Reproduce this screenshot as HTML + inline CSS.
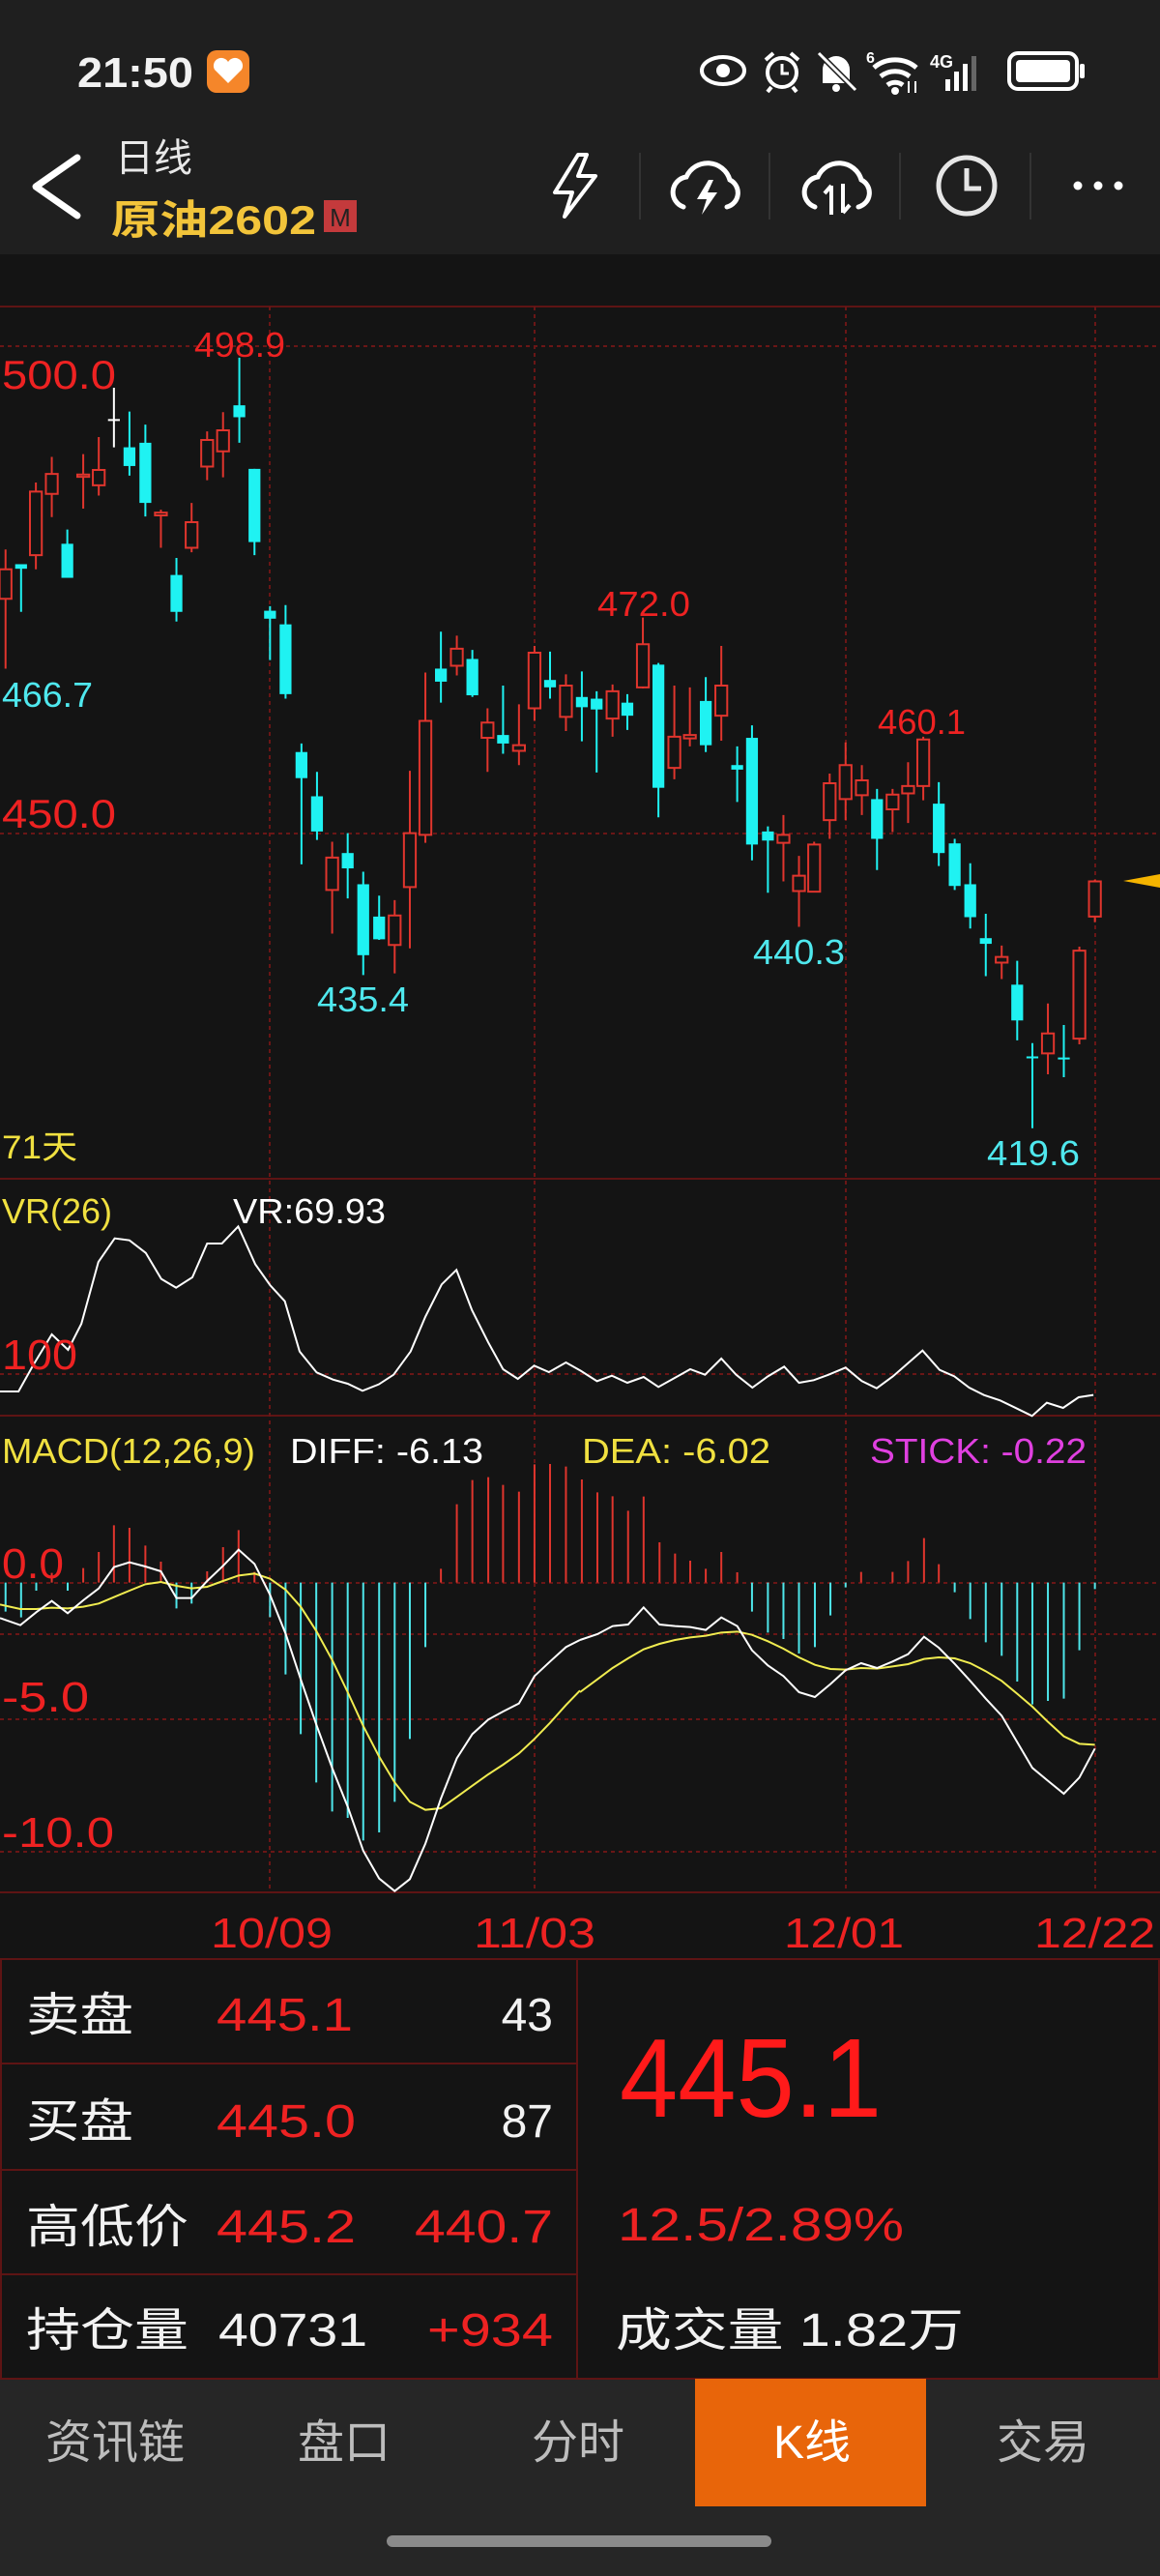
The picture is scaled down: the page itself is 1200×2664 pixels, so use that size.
<!DOCTYPE html>
<html><head><meta charset="utf-8">
<style>
html,body{margin:0;padding:0;background:#141414;}
svg{display:block}
text{font-family:"Liberation Sans","Noto Sans CJK SC",sans-serif;}
</style></head>
<body>
<svg width="1200" height="2664" viewBox="0 0 1200 2664" xmlns="http://www.w3.org/2000/svg">
<!-- backgrounds -->
<rect x="0" y="0" width="1200" height="263" fill="#1f1f1f"/>
<rect x="0" y="263" width="1200" height="2197" fill="#141414"/>
<rect x="0" y="2460" width="1200" height="204" fill="#262626"/>

<!-- status bar -->
<text x="80" y="90" font-size="44" font-weight="bold" fill="#f2f2f2" textLength="120" lengthAdjust="spacingAndGlyphs">21:50</text>
<rect x="214" y="52" width="44" height="44" rx="10" fill="#f5862a"/>
<path d="M236 86 L222 72 A7 7 0 0 1 236 64 A7 7 0 0 1 250 72 Z" fill="#fff"/>
<!-- eye -->
<ellipse cx="748" cy="73" rx="22" ry="14" fill="none" stroke="#fff" stroke-width="4"/>
<circle cx="748" cy="73" r="7" fill="#fff"/>
<!-- alarm -->
<circle cx="809" cy="75" r="15" fill="none" stroke="#fff" stroke-width="4"/>
<path d="M809 66V76H816" stroke="#fff" stroke-width="3" fill="none"/>
<path d="M792 62 L800 55 M826 62 L818 55 M798 90 L794 95 M820 90 L824 95" stroke="#fff" stroke-width="4"/>
<!-- bell muted -->
<path d="M851 86 V72 A14 14 0 0 1 879 72 V86 Z" fill="#fff"/>
<circle cx="865" cy="91" r="4" fill="#fff"/>
<path d="M846 54 L886 94" stroke="#1f1f1f" stroke-width="6"/><path d="M847 55 L885 93" stroke="#fff" stroke-width="3"/>
<!-- wifi -->
<text x="896" y="65" font-size="16" font-weight="bold" fill="#fff">6</text>
<path d="M904 70 A34 34 0 0 1 948 70 M911 79 A24 24 0 0 1 941 79 M918 88 A13 13 0 0 1 934 88" stroke="#fff" stroke-width="5" fill="none"/>
<circle cx="926" cy="94" r="4" fill="#fff"/>
<path d="M940 84 V96 M947 84 V96" stroke="#fff" stroke-width="2"/>
<!-- 4G signal -->
<text x="962" y="70" font-size="18" font-weight="bold" fill="#fff">4G</text>
<rect x="978" y="82" width="5" height="12" fill="#fff"/><rect x="987" y="74" width="5" height="20" fill="#fff"/><rect x="996" y="66" width="5" height="28" fill="#fff"/><rect x="1005" y="58" width="5" height="36" fill="#666"/>
<!-- battery -->
<rect x="1044" y="55" width="70" height="37" rx="9" fill="none" stroke="#fff" stroke-width="4"/>
<rect x="1051" y="62" width="56" height="23" rx="4" fill="#fff"/>
<rect x="1117" y="66" width="5" height="15" rx="2" fill="#fff"/>

<!-- header row -->
<polyline points="80,163 37,193 80,223" fill="none" stroke="#fff" stroke-width="7" stroke-linecap="round" stroke-linejoin="round"/>
<text x="119" y="177" font-size="40" fill="#e8e8e8">日线</text>
<text x="115" y="242" font-size="42" font-weight="bold" fill="#f2c43a" textLength="212" lengthAdjust="spacingAndGlyphs">原油2602</text>
<rect x="335" y="207" width="34" height="33" fill="#c43a3c"/>
<text x="352" y="234" font-size="26" fill="#222" text-anchor="middle">M</text>
<path d="M598 160 L574 199 L592 199 L584 224 L616 182 L598 182 L607 160 Z" fill="none" stroke="#fff" stroke-width="4" stroke-linejoin="round"/>
<path d="M662 158V227 M796 158V227 M931 158V227 M1066 158V227" stroke="#333" stroke-width="2"/>
<path d="M707 214 A16 16 0 0 1 710 183 A24 24 0 0 1 755 186 A15 15 0 0 1 752 214" fill="none" stroke="#fff" stroke-width="5" stroke-linecap="round"/>
<path d="M733 186 L721 206 L731 206 L726 222 L742 199 L732 199 L738 186Z" fill="#fff"/>
<path d="M843 214 A16 16 0 0 1 846 183 A24 24 0 0 1 891 186 A15 15 0 0 1 888 214" fill="none" stroke="#fff" stroke-width="5" stroke-linecap="round"/>
<path d="M860 222V192 M853 200L860 192 M872 190V220 M879 212L872 220" fill="none" stroke="#fff" stroke-width="4"/>
<circle cx="1000" cy="192" r="29" fill="none" stroke="#e6e6e6" stroke-width="5"/>
<path d="M1000 174V195H1015" fill="none" stroke="#e6e6e6" stroke-width="5"/>
<circle cx="1115" cy="192" r="4.5" fill="#fff"/><circle cx="1136" cy="192" r="4.5" fill="#fff"/><circle cx="1157" cy="192" r="4.5" fill="#fff"/>

<!-- GRID -->
<g stroke="#5e1414" stroke-width="2">
<path d="M0 317H1200 M0 1219H1200 M0 1464H1200 M0 1957H1200 M0 2026H1200"/>
</g>
<g stroke="#6a1616" stroke-width="2" stroke-dasharray="4 4">
<path d="M0 358H1200 M0 862H1200 M0 1421H1200 M0 1637H1200 M0 1690H1200 M0 1778H1200 M0 1915H1200"/>
<path d="M279 317V1957 M553 317V1957 M875 317V1957 M1133 317V1957"/>
</g>

<!-- CANDLES left -->
<g transform="translate(0,310) scale(0.38265,0.58685)">
<path fill="none" stroke="#1ff2f2" stroke-width="2" vector-effect="non-scaling-stroke" d="M57 468V550 M182 405V490 M350 197V310 M393 220V382 M477 455V567 M647 102V252 M688 298V450 M730 540V635 M772 538V703 M815 782V995 M857 832V952 M940 940V1055 M982 1008V1190 M1025 1050V1128 M1192 585V710 M1277 617V700 M1360 680V800 M1487 620V703"/>
<path fill="none" stroke="#e0352d" stroke-width="2" vector-effect="non-scaling-stroke" d="M15 440V650 M97 322V475 M140 277V383 M225 272V368 M267 242V345 M435 370V437 M518 358V445 M560 232V318 M603 198V313 M898 955V1117 M1067 1058V1187 M1108 830V1143 M1150 657V957 M1235 592V662 M1318 720V832 M1403 713V820 M1445 610V742 M1530 660V760"/>
<path fill="none" stroke="#fff" stroke-width="2" vector-effect="non-scaling-stroke" d="M308 155V260 M292 212H324"/>
<g fill="#1ff2f2">
<rect x="41" y="466" width="32" height="8"/><rect x="166" y="430" width="32" height="60"/><rect x="334" y="260" width="32" height="33"/><rect x="377" y="252" width="32" height="106"/><rect x="461" y="485" width="32" height="65"/><rect x="631" y="186" width="32" height="21"/><rect x="672" y="298" width="32" height="129"/><rect x="714" y="548" width="32" height="14"/><rect x="756" y="572" width="32" height="123"/><rect x="799" y="797" width="32" height="46"/><rect x="841" y="875" width="32" height="62"/><rect x="924" y="975" width="32" height="27"/><rect x="966" y="1030" width="32" height="125"/><rect x="1009" y="1087" width="32" height="40"/><rect x="1176" y="650" width="32" height="23"/><rect x="1261" y="633" width="32" height="64"/><rect x="1344" y="767" width="32" height="15"/><rect x="1471" y="670" width="32" height="13"/>
</g>
<g fill="#141414" stroke="#e0352d" stroke-width="2" vector-effect="non-scaling-stroke">
<rect x="-1" y="475" width="32" height="52" vector-effect="non-scaling-stroke"/><rect x="81" y="338" width="32" height="112" vector-effect="non-scaling-stroke"/><rect x="124" y="307" width="32" height="35" vector-effect="non-scaling-stroke"/><rect x="209" y="308" width="32" height="4" vector-effect="non-scaling-stroke"/><rect x="251" y="300" width="32" height="27" vector-effect="non-scaling-stroke"/><rect x="419" y="375" width="32" height="5" vector-effect="non-scaling-stroke"/><rect x="502" y="392" width="32" height="45" vector-effect="non-scaling-stroke"/><rect x="544" y="247" width="32" height="47" vector-effect="non-scaling-stroke"/><rect x="587" y="230" width="32" height="37" vector-effect="non-scaling-stroke"/><rect x="882" y="983" width="32" height="57" vector-effect="non-scaling-stroke"/><rect x="1051" y="1085" width="32" height="52" vector-effect="non-scaling-stroke"/><rect x="1092" y="940" width="32" height="95" vector-effect="non-scaling-stroke"/><rect x="1134" y="742" width="32" height="201" vector-effect="non-scaling-stroke"/><rect x="1219" y="615" width="32" height="30" vector-effect="non-scaling-stroke"/><rect x="1302" y="745" width="32" height="27" vector-effect="non-scaling-stroke"/><rect x="1387" y="785" width="32" height="10" vector-effect="non-scaling-stroke"/><rect x="1429" y="622" width="32" height="98" vector-effect="non-scaling-stroke"/><rect x="1514" y="680" width="32" height="55" vector-effect="non-scaling-stroke"/>
</g>
</g>
<!-- CANDLES right -->
<g transform="translate(600,310) scale(0.38265,0.58685)">
<path fill="none" stroke="#1ff2f2" stroke-width="2" vector-effect="non-scaling-stroke" d="M5 655V778 M45 690V833 M128 695V758 M212 640V912 M340 665V797 M425 787V885 M465 750V988 M508 928V1045 M803 862V1005 M970 850V998 M1013 950V1040 M1055 993V1108 M1097 1082V1192 M1182 1165V1305 M1223 1310V1460 M1308 1278V1370 M1207 1335H1239 M1292 1337H1324"/>
<path fill="none" stroke="#e0352d" stroke-width="2" vector-effect="non-scaling-stroke" d="M88 678V770 M170 560V685 M255 680V845 M297 683V787 M382 610V777 M550 908V1025 M592 980V1105 M633 955V1043 M675 835V950 M718 780V917 M762 820V908 M845 862V938 M887 815V922 M928 770V882 M1140 1138V1197 M1265 1240V1365 M1350 1140V1312 M1392 1022V1097"/>
<g fill="#1ff2f2">
<rect x="-11" y="700" width="32" height="18"/><rect x="29" y="703" width="32" height="19"/><rect x="112" y="710" width="32" height="23"/><rect x="196" y="643" width="32" height="217"/><rect x="324" y="707" width="32" height="78"/><rect x="409" y="820" width="32" height="8"/><rect x="449" y="772" width="32" height="188"/><rect x="492" y="937" width="32" height="16"/><rect x="787" y="880" width="32" height="70"/><rect x="954" y="888" width="32" height="87"/><rect x="997" y="958" width="32" height="75"/><rect x="1039" y="1030" width="32" height="58"/><rect x="1081" y="1125" width="32" height="10"/><rect x="1166" y="1207" width="32" height="63"/>
</g>
<g fill="#141414" stroke="#e0352d" stroke-width="2">
<rect x="72" y="690" width="32" height="48" vector-effect="non-scaling-stroke"/><rect x="154" y="607" width="32" height="76" vector-effect="non-scaling-stroke"/><rect x="239" y="770" width="32" height="55" vector-effect="non-scaling-stroke"/><rect x="281" y="767" width="32" height="6" vector-effect="non-scaling-stroke"/><rect x="366" y="680" width="32" height="53" vector-effect="non-scaling-stroke"/><rect x="534" y="943" width="32" height="14" vector-effect="non-scaling-stroke"/><rect x="576" y="1015" width="32" height="27" vector-effect="non-scaling-stroke"/><rect x="617" y="960" width="32" height="83" vector-effect="non-scaling-stroke"/><rect x="659" y="852" width="32" height="65" vector-effect="non-scaling-stroke"/><rect x="702" y="820" width="32" height="60" vector-effect="non-scaling-stroke"/><rect x="746" y="847" width="32" height="26" vector-effect="non-scaling-stroke"/><rect x="829" y="872" width="32" height="26" vector-effect="non-scaling-stroke"/><rect x="871" y="857" width="32" height="13" vector-effect="non-scaling-stroke"/><rect x="912" y="775" width="32" height="82" vector-effect="non-scaling-stroke"/><rect x="1124" y="1158" width="32" height="10" vector-effect="non-scaling-stroke"/><rect x="1249" y="1293" width="32" height="35" vector-effect="non-scaling-stroke"/><rect x="1334" y="1147" width="32" height="155" vector-effect="non-scaling-stroke"/><rect x="1376" y="1025" width="32" height="62" vector-effect="non-scaling-stroke"/>
</g>
</g>
<polygon points="1162,911 1200,904 1200,918" fill="#f5b400"/>

<!-- main chart labels -->
<text x="2" y="402" font-size="42" fill="#ee2222" textLength="118" lengthAdjust="spacingAndGlyphs">500.0</text>
<text x="2" y="856" font-size="42" fill="#ee2222" textLength="118" lengthAdjust="spacingAndGlyphs">450.0</text>
<text x="2" y="731" font-size="36" fill="#4fe8ee" textLength="94" lengthAdjust="spacingAndGlyphs">466.7</text>
<text x="201" y="369" font-size="36" fill="#ee2222" textLength="94" lengthAdjust="spacingAndGlyphs">498.9</text>
<text x="328" y="1046" font-size="36" fill="#4fe8ee" textLength="95" lengthAdjust="spacingAndGlyphs">435.4</text>
<text x="618" y="637" font-size="36" fill="#ee2222" textLength="96" lengthAdjust="spacingAndGlyphs">472.0</text>
<text x="908" y="759" font-size="36" fill="#ee2222" textLength="91" lengthAdjust="spacingAndGlyphs">460.1</text>
<text x="779" y="997" font-size="36" fill="#4fe8ee" textLength="95" lengthAdjust="spacingAndGlyphs">440.3</text>
<text x="1021" y="1205" font-size="36" fill="#4fe8ee" textLength="96" lengthAdjust="spacingAndGlyphs">419.6</text>
<text x="2" y="1198" font-size="34" fill="#f0e040" textLength="78" lengthAdjust="spacingAndGlyphs">71天</text>

<!-- VR -->
<g transform="translate(0,1215) scale(0.76531,0.33333)">
<polyline fill="none" stroke="#fff" stroke-width="2" vector-effect="non-scaling-stroke" points="0,672 25,672 45,590 70,495 92,543 110,462 133,270 155,197 175,203 197,242 218,323 238,350 260,318 280,213 300,213 322,160 345,277 365,342 385,392 405,548 428,613 450,635 470,648 490,670 512,650 532,620 555,548 575,440 597,340 617,295 638,420 660,520 680,603 700,633 722,592 742,612 765,582 785,608 807,640 827,623 848,645 870,627 890,658 912,630 933,603 953,620 975,570 995,620 1017,660 1038,625 1060,595 1080,645 1100,637 1120,620 1143,598 1165,640 1185,662 1207,625 1227,585 1247,545 1270,605 1290,625 1310,660 1330,683 1352,700 1372,722 1395,748 1415,707 1437,723 1458,690 1478,683"/>
</g>
<text x="2" y="1265" font-size="36" fill="#f0e040" textLength="114" lengthAdjust="spacingAndGlyphs">VR(26)</text>
<text x="241" y="1265" font-size="36" fill="#fff" textLength="158" lengthAdjust="spacingAndGlyphs">VR:69.93</text>
<text x="2" y="1416" font-size="44" fill="#ee2222" textLength="78" lengthAdjust="spacingAndGlyphs">100</text>

<!-- MACD -->
<g transform="translate(0,1460) scale(0.38265,0.33333)">
<path fill="none" stroke="#e0352d" stroke-width="2" vector-effect="non-scaling-stroke" d="M140 530V500 M225 530V485 M267 530V435 M308 530V352 M350 530V360 M393 530V415 M435 530V465 M560 530V495 M603 530V420 M645 530V367 M688 530V497 M1192 530V487 M1235 530V287 M1277 530V212 M1320 530V203 M1360 530V227 M1403 530V248 M1445 530V163 M1487 530V162 M1530 530V170"/>
<path fill="none" stroke="#4ee6ea" stroke-width="2" vector-effect="non-scaling-stroke" d="M15 530V620 M57 530V638 M98 530V555 M183 530V555 M477 530V610 M518 530V595 M730 530V637 M772 530V815 M813 530V1000 M855 530V1150 M898 530V1240 M940 530V1260 M982 530V1330 M1025 530V1305 M1067 530V1210 M1108 530V1015 M1150 530V730"/>
<polyline fill="none" stroke="#f0ec50" stroke-width="2" vector-effect="non-scaling-stroke" points="0,598 55,612 98,612 140,608 183,610 225,605 267,595 308,575 350,555 393,535 435,528 477,540 518,548 560,543 603,525 645,508 688,502 730,518 772,552 813,605 855,680 898,770 940,870 982,975 1025,1070 1067,1150 1108,1210 1150,1235 1192,1230 1235,1195 1277,1160 1320,1125 1360,1095 1403,1060 1445,1015 1487,965 1530,910 1568,865"/>
<polyline fill="none" stroke="#fff" stroke-width="2" vector-effect="non-scaling-stroke" points="0,640 55,662 98,622 140,587 183,625 225,585 267,548 308,482 350,467 393,480 435,495 477,578 518,578 560,525 603,478 645,428 688,472 730,568 772,688 813,830 855,970 898,1105 940,1225 982,1362 1025,1448 1067,1487 1108,1450 1150,1340 1192,1200 1235,1075 1277,1000 1320,955 1360,930 1403,905 1445,820 1487,775 1530,730 1568,708"/>
</g>
<g transform="translate(600,1460) scale(0.38265,0.33333)">
<path fill="none" stroke="#e0352d" stroke-width="2" vector-effect="non-scaling-stroke" d="M5 530V210 M47 530V250 M88 530V262 M130 530V307 M172 530V263 M215 530V405 M257 530V440 M298 530V462 M340 530V487 M382 530V435 M425 530V498 M760 530V497 M845 530V497 M887 530V463 M930 530V392 M970 530V473"/>
<path fill="none" stroke="#4ee6ea" stroke-width="2" vector-effect="non-scaling-stroke" d="M465 530V620 M508 530V685 M550 530V705 M592 530V750 M635 530V730 M677 530V632 M718 530V545 M1013 530V560 M1055 530V643 M1097 530V715 M1140 530V757 M1182 530V837 M1223 530V908 M1265 530V897 M1308 530V890 M1350 530V740 M1392 530V550"/>
<polyline fill="none" stroke="#f0ec50" stroke-width="2" vector-effect="non-scaling-stroke" points="0,870 47,830 88,795 130,765 172,737 215,720 257,708 298,700 340,695 382,685 425,682 465,692 508,712 550,735 592,762 635,785 677,798 718,800 760,795 803,797 845,790 887,783 930,767 970,762 1013,765 1055,780 1097,805 1140,835 1182,875 1223,915 1265,962 1308,1007 1350,1030 1392,1033"/>
<polyline fill="none" stroke="#fff" stroke-width="2" vector-effect="non-scaling-stroke" points="0,708 47,690 88,665 130,660 172,607 215,660 257,665 298,668 340,677 382,638 425,665 465,740 508,787 550,820 592,870 635,885 677,845 718,802 760,780 803,795 845,775 887,752 930,698 970,732 1013,782 1055,835 1097,890 1140,943 1182,1025 1223,1105 1265,1145 1308,1185 1350,1135 1392,1045"/>
</g>
<text x="2" y="1513" font-size="36" fill="#f0e040" textLength="262" lengthAdjust="spacingAndGlyphs">MACD(12,26,9)</text>
<text x="300" y="1513" font-size="36" fill="#fff" textLength="200" lengthAdjust="spacingAndGlyphs">DIFF: -6.13</text>
<text x="602" y="1513" font-size="36" fill="#f0e040" textLength="195" lengthAdjust="spacingAndGlyphs">DEA: -6.02</text>
<text x="900" y="1513" font-size="36" fill="#e040e0" textLength="224" lengthAdjust="spacingAndGlyphs">STICK: -0.22</text>
<text x="2" y="1632" font-size="44" fill="#ee2222" textLength="64" lengthAdjust="spacingAndGlyphs">0.0</text>
<text x="2" y="1770" font-size="44" fill="#ee2222" textLength="90" lengthAdjust="spacingAndGlyphs">-5.0</text>
<text x="2" y="1910" font-size="44" fill="#ee2222" textLength="116" lengthAdjust="spacingAndGlyphs">-10.0</text>

<!-- dates -->
<g font-size="44" fill="#ee2222">
<text x="218" y="2014" textLength="126" lengthAdjust="spacingAndGlyphs">10/09</text>
<text x="490" y="2014" textLength="126" lengthAdjust="spacingAndGlyphs">11/03</text>
<text x="811" y="2014" textLength="124" lengthAdjust="spacingAndGlyphs">12/01</text>
<text x="1070" y="2014" textLength="125" lengthAdjust="spacingAndGlyphs">12/22</text>
</g>

<!-- table -->
<g stroke="#5e1414" stroke-width="2">
<path d="M0 2134H597 M0 2244H597 M0 2352H597 M0 2460H1200 M597 2026V2460 M1 2026V2460 M1199 2026V2460"/>
</g>
<g font-size="48" fill="#f2f2f2">
<text x="27" y="2100" textLength="111" lengthAdjust="spacingAndGlyphs">卖盘</text>
<text x="27" y="2210" textLength="111" lengthAdjust="spacingAndGlyphs">买盘</text>
<text x="27" y="2319" textLength="168" lengthAdjust="spacingAndGlyphs">高低价</text>
<text x="27" y="2426" textLength="168" lengthAdjust="spacingAndGlyphs">持仓量</text>
<text x="572" y="2100" text-anchor="end">43</text>
<text x="572" y="2210" text-anchor="end">87</text>
<text x="226" y="2426" textLength="154" lengthAdjust="spacingAndGlyphs">40731</text>
<text x="637" y="2426" textLength="360" lengthAdjust="spacingAndGlyphs">成交量 1.82万</text>
</g>
<g font-size="48" fill="#ee2222">
<text x="224" y="2100" textLength="141" lengthAdjust="spacingAndGlyphs">445.1</text>
<text x="224" y="2210" textLength="144" lengthAdjust="spacingAndGlyphs">445.0</text>
<text x="224" y="2319" textLength="144" lengthAdjust="spacingAndGlyphs">445.2</text>
<text x="429" y="2319" textLength="143" lengthAdjust="spacingAndGlyphs">440.7</text>
<text x="442" y="2426" textLength="130" lengthAdjust="spacingAndGlyphs">+934</text>
<text x="639" y="2317" textLength="296" lengthAdjust="spacingAndGlyphs">12.5/2.89%</text>
</g>
<text x="641" y="2189" font-size="116" fill="#ff1a1a" textLength="271" lengthAdjust="spacingAndGlyphs">445.1</text>

<!-- tabs -->
<rect x="719" y="2460" width="239" height="132" fill="#e8650a"/>
<g font-size="48" fill="#bdbdbd" text-anchor="middle">
<text x="119" y="2542">资讯链</text>
<text x="356" y="2542">盘口</text>
<text x="598" y="2542">分时</text>
<text x="840" y="2542" fill="#fff">K线</text>
<text x="1079" y="2542">交易</text>
</g>
<rect x="400" y="2622" width="398" height="12" rx="6" fill="#8a8a8a"/>
</svg>
</body></html>
